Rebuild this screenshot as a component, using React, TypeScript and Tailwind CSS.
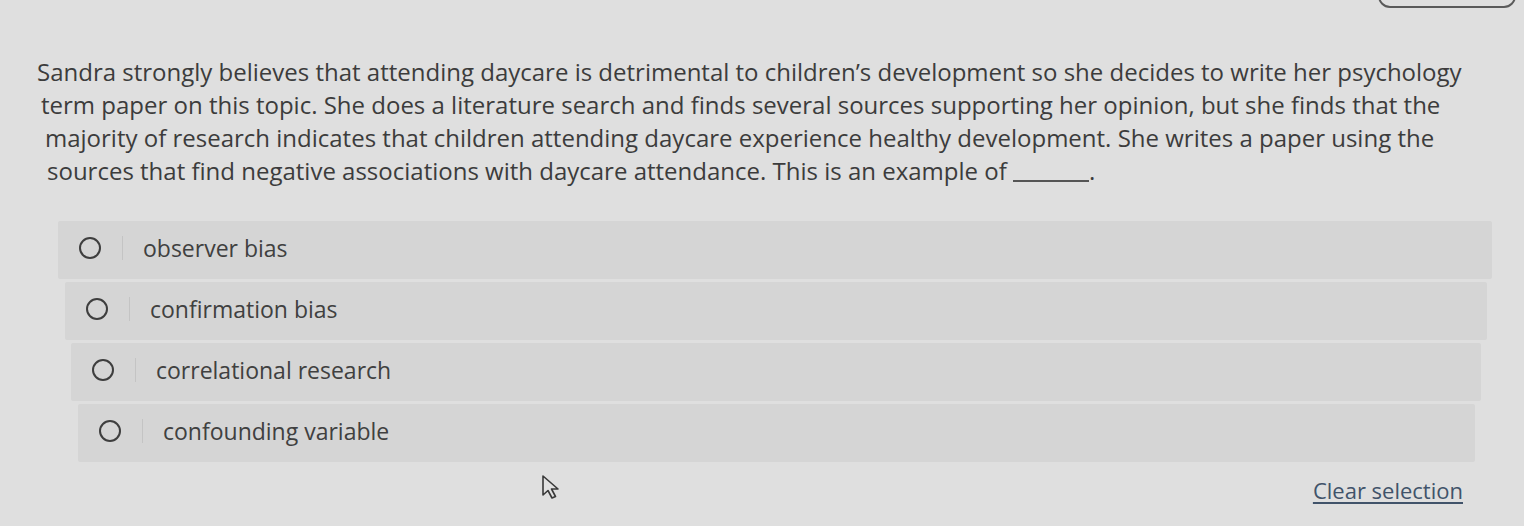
import React from 'react';

const questionLines = [
  { text: 'Sandra strongly believes that attending daycare is detrimental to children’s development so she decides to write her psychology', pad: 'pl-[37px]' },
  { text: 'term paper on this topic. She does a literature search and finds several sources supporting her opinion, but she finds that the', pad: 'pl-[41px]' },
  { text: 'majority of research indicates that children attending daycare experience healthy development. She writes a paper using the', pad: 'pl-[45px]' },
];

const options = [
  { label: 'observer bias', box: 'ml-[58px] mr-[32px]' },
  { label: 'confirmation bias', box: 'ml-[65px] mr-[37px]' },
  { label: 'correlational research', box: 'ml-[71px] mr-[43px]' },
  { label: 'confounding variable', box: 'ml-[78px] mr-[49px]' },
];

function Cursor() {
  return (
    <svg className="absolute left-[541px] top-[474px]" width="26" height="26" viewBox="0 0 26 26" fill="none">
      <path
        d="M2 2 L2 21 L7 16.5 L11 24 L14.5 22.5 L10.5 15 L17 15 Z"
        stroke="#3a3a3a"
        strokeWidth="1.6"
        strokeLinejoin="round"
        fill="#e2e2e2"
      />
    </svg>
  );
}

export default function App() {
  return (
    <div className="relative w-[1524px] h-[526px] overflow-hidden bg-[#dfdfdf] font-['Open_Sans',sans-serif] text-[#3c3c3c]">
      {/* header button, cut off by the top edge */}
      <div className="flex justify-end pr-[8px] h-[0px]">
        <div className="-mt-[30px] w-[138px] h-[38px] rounded-[12px] border-2 border-[#5a5a5a]" />
      </div>

      {/* Question */}
      <div className="pt-[55px] text-[24px] leading-[33px] whitespace-nowrap">
        {questionLines.map((line) => (
          <div key={line.text} className={line.pad}>
            {line.text}
          </div>
        ))}
        <div className="pl-[47px]">
          sources that find negative associations with daycare attendance. This is an example of{' '}
          <span className="inline-block w-[76px] border-b-2 border-[#555] align-baseline translate-y-[2px]" />
          <span>.</span>
        </div>
      </div>

      {/* Options */}
      <div className="mt-[34px] flex flex-col gap-[3px]">
        {options.map((opt) => (
          <div key={opt.label} className={`${opt.box} h-[58px] flex items-center bg-[#d5d5d5] rounded-[2px]`}>
            <div className="ml-[21px] -mt-[4px] w-[22px] h-[22px] rounded-full border-[2.5px] border-[#3e3e3e]" />
            <div className="ml-[21px] -mt-[4px] w-px h-[24px] bg-[#c4c4c4]" />
            <span className="ml-[20px] -mt-[4px] text-[23px] text-[#404040]">{opt.label}</span>
          </div>
        ))}
      </div>

      {/* Clear selection */}
      <div className="flex justify-end pr-[61px] mt-[12px]">
        <button className="text-[22px] text-[#41536a] underline underline-offset-[3px] decoration-[1.5px]">
          Clear selection
        </button>
      </div>

      <Cursor />
    </div>
  );
}
